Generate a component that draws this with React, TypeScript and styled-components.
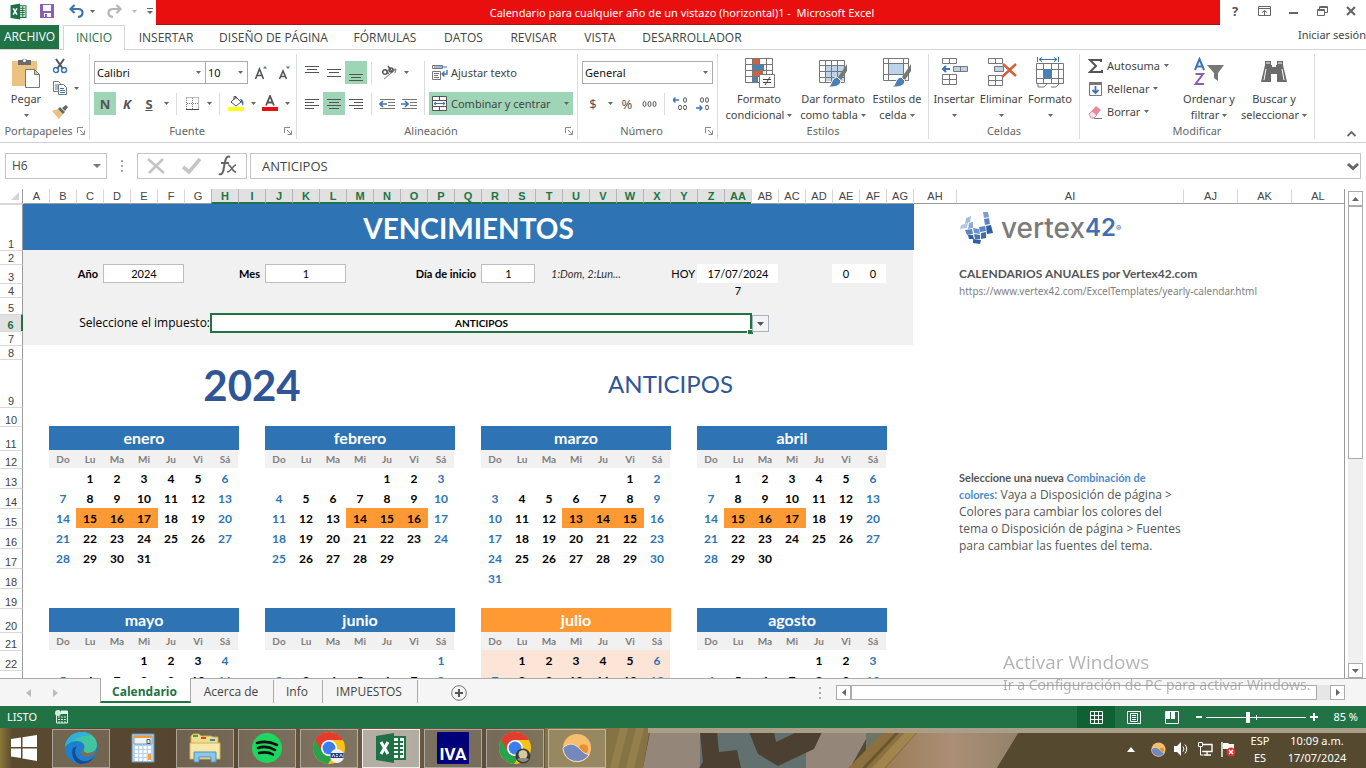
import React from "react";
import styled, { createGlobalStyle, css } from "styled-components";

const UI = `"Noto Sans", "Open Sans", sans-serif`;
const TABS_FONT = `"Open Sans", "Noto Sans", sans-serif`;
const CELL = `Lato, "Open Sans", sans-serif`;
const GREEN = "#217346";
const BLUE = "#2e74b5";
const ORANGE = "#ff9933";
const MINT = "#9fd5b7";
const INK = "#444444";
const GREY = "#777777";

const Global = createGlobalStyle`
  *, *::before, *::after { box-sizing: border-box; }
  body { margin: 0; background: #fff; color: ${INK}; font: 11px/16px ${UI}; }
  button, select, input { font: inherit; color: inherit; margin: 0; }
  button { border: 0; padding: 0; background: none; }
  svg { display: block; flex: none; }
`;

const Shell = styled.div`
  display: flex;
  flex-direction: column;
  height: 100vh;
  overflow: hidden;
`;

/* ---------- title bar ---------- */
const TitleBar = styled.header`
  display: flex;
  height: 25px;
`;
const QuickAccess = styled.div`
  display: flex;
  align-items: center;
  width: 156px;
  padding: 0 0 3px 7px;
`;
const Title = styled.h1`
  flex: 1;
  margin: 0;
  padding-right: 12px;
  background: #ea0f0f;
  border-bottom: 1px solid #a81414;
  color: #fff;
  font-size: 11px;
  font-weight: 400;
  line-height: 25px;
  text-align: center;
  white-space: pre;
`;
const WindowButtons = styled.div`
  display: flex;
  align-items: center;
  justify-content: space-between;
  width: 146px;
  padding: 0 4px 3px;
`;
const IconButton = styled.button<{ $w?: number; $on?: boolean }>`
  display: flex;
  flex: none;
  align-items: center;
  justify-content: center;
  width: ${(p) => p.$w ?? 22}px;
  height: 23px;
  background: ${(p) => (p.$on ? MINT : "transparent")};
  color: #555;
  font-size: 13px;
`;

/* ---------- tabs ---------- */
const TabStrip = styled.nav`
  display: flex;
  height: 25px;
  border-bottom: 1px solid #d4d4d4;
`;
const FileTab = styled.button`
  width: 59px;
  margin-right: 4px;
  height: 24px;
  background: ${GREEN};
  color: #fff;
  font-family: ${TABS_FONT};
  font-size: 12px;
`;
const Tab = styled.button<{ $w: number; $active?: boolean }>`
  width: ${(p) => p.$w}px;
  height: 25px;
  font-family: ${TABS_FONT};
  font-size: 12px;
  white-space: nowrap;
  ${(p) =>
    p.$active &&
    css`
      color: ${GREEN};
      background: #fff;
      border: 1px solid #d4d4d4;
      border-bottom: 0;
    `}
`;
const SignIn = styled.a`
  margin-left: auto;
  line-height: 20px;
  color: ${INK};
  text-decoration: none;
`;

/* ---------- ribbon ---------- */
const Ribbon = styled.section`
  display: flex;
  height: 93px;
  padding-top: 4px;
  border-bottom: 1px solid #d0d0d0;
`;
const Group = styled.div<{ $w: number }>`
  display: flex;
  flex: none;
  flex-direction: column;
  width: ${(p) => p.$w}px;
  height: 85px;
  border-right: 1px solid #dcdcdc;
`;
const GroupBody = styled.div`
  display: flex;
  flex: none;
  height: 72px;
`;
const GroupLabel = styled.div`
  display: flex;
  flex: none;
  align-items: center;
  height: 16px;
  color: #666;
  span { flex: 1; text-align: center; }
  svg { margin-right: 4px; }
`;
const Rows = styled.div<{ $pad?: number }>`
  display: flex;
  flex-direction: column;
  gap: 8px;
  padding: 7px 0 0 ${(p) => p.$pad ?? 4}px;
`;
const Row = styled.div`
  display: flex;
  align-items: center;
  height: 23px;
`;
const VLine = styled.i<{ $m?: number; $h?: number }>`
  flex: none;
  width: 1px;
  height: ${(p) => p.$h ?? 22}px;
  margin: 0 ${(p) => p.$m ?? 4}px;
  background: #dcdcdc;
`;
const TallLine = styled(VLine)`
  margin: 7px 4px 0;
  height: 54px;
`;
const SelectBox = styled.label<{ $w: number }>`
  display: flex;
  flex: none;
  align-items: center;
  width: ${(p) => p.$w}px;
  height: 23px;
  border: 1px solid #ababab;
  background: #fff;
  color: #111;
  & + & { margin-left: -1px; }
  select {
    flex: 1;
    min-width: 0;
    height: 20px;
    padding: 0 0 0 2px;
    border: 0;
    appearance: none;
    background: none;
  }
  svg { margin-right: 4px; }
`;
const BigButton = styled.button<{ $w: number }>`
  display: flex;
  flex: none;
  flex-direction: column;
  align-items: center;
  width: ${(p) => p.$w}px;
  height: 70px;
  padding-top: 3px;
  line-height: 16px;
  white-space: nowrap;
  > svg:first-child { margin-bottom: 2px; }
`;
const LabelLine = styled.span`
  display: flex;
  align-items: center;
  justify-content: center;
  gap: 3px;
  height: 16px;
`;
const SmallStack = styled.div<{ $w: number; $ml?: number }>`
  display: flex;
  flex: none;
  flex-direction: column;
  width: ${(p) => p.$w}px;
  margin-left: ${(p) => p.$ml ?? 0}px;
`;
const SmallButton = styled.button<{ $gap?: number }>`
  display: flex;
  flex: none;
  align-items: center;
  gap: ${(p) => p.$gap ?? 4}px;
  height: 23px;
  white-space: nowrap;
`;
const WideButton = styled.button<{ $on?: boolean }>`
  display: flex;
  align-items: center;
  gap: 3px;
  width: 144px;
  height: 23px;
  padding: 0 4px 0 3px;
  background: ${(p) => (p.$on ? MINT : "transparent")};
  white-space: nowrap;
  svg:last-child:not(:first-child) { margin-left: auto; }
`;
const RibbonEnd = styled.div`
  display: flex;
  flex: 1;
  align-items: flex-end;
  justify-content: flex-end;
  padding: 0 10px 5px 0;
`;

/* ---------- formula bar ---------- */
const FormulaBar = styled.div`
  display: flex;
  height: 46px;
  padding: 10px 5px 10px 5px;
`;
const Box = styled.div<{ $w?: number }>`
  display: flex;
  align-items: center;
  ${(p) => (p.$w ? `width: ${p.$w}px;` : "flex: 1;")}
  height: 26px;
  border: 1px solid #c4c4c4;
  background: #fff;
  input {
    flex: 1;
    min-width: 0;
    padding: 0 0 0 ${(p) => (p.$w ? 6 : 11)}px;
    border: 0;
    outline: 0;
    background: none;
    font-family: ${TABS_FONT};
    font-size: ${(p) => (p.$w ? 12 : 13)}px;
  }
`;
const Grip = styled.div<{ $w: number }>`
  display: flex;
  align-items: center;
  justify-content: center;
  width: ${(p) => p.$w}px;
`;

/* ---------- sheet ---------- */
const Main = styled.main`
  display: flex;
  flex: 1;
  min-height: 0;
`;
const GridPane = styled.div`
  flex: 1;
  min-width: 0;
  overflow: hidden;
  border-right: 1px solid #9b9b9b;
`;
const Grid = styled.table`
  width: 100%;
  table-layout: fixed;
  border-collapse: separate;
  border-spacing: 0;
  font-family: ${CELL};
  color: #000;
  th { padding: 0; white-space: nowrap; }
`;
const ColHead = styled.th<{ $sel?: boolean; $first?: boolean }>`
  height: 15px;
  border-left: 1px solid ${(p) => (p.$first ? "transparent" : p.$sel ? "#b5b5b5" : "#d8d8d8")};
  border-bottom: ${(p) => (p.$sel ? `2px solid ${GREEN}` : "1px solid #9b9b9b")};
  background: ${(p) => (p.$sel ? "#e1e1e1" : "#fff")};
  color: ${(p) => (p.$sel ? GREEN : INK)};
  font: ${(p) => (p.$sel ? 700 : 400)} 11px/12px "Liberation Sans", sans-serif;
`;
const Corner = styled.th`
  border-bottom: 1px solid #d8d8d8;
  border-right: 1px solid #9b9b9b;
  svg { margin-left: auto; margin-right: 3px; }
`;
const RowHead = styled.th<{ $h: number; $sel?: boolean }>`
  height: ${(p) => p.$h}px;
  border-top: 1px solid #d8d8d8;
  border-right: ${(p) => (p.$sel ? `2px solid ${GREEN}` : "1px solid #9b9b9b")};
  background: ${(p) => (p.$sel ? "#e1e1e1" : "#fff")};
  color: ${(p) => (p.$sel ? GREEN : INK)};
  font: ${(p) => (p.$sel ? 700 : 400)} 11px/12px "Liberation Sans", sans-serif;
  vertical-align: bottom;
`;

type Kind =
  | "blank" | "grey" | "banner" | "label" | "hoy" | "prompt" | "field" | "white" | "hint"
  | "selected" | "year" | "tax" | "month" | "monthNow" | "wday" | "day" | "weekend"
  | "due" | "now" | "nowEnd" | "ad" | "note";

const kinds: Record<Kind, string> = {
  blank: "",
  grey: "background:#f1f1f1; font-size:11px;",
  banner: `background:${BLUE}; box-shadow:1px 0 ${BLUE}; color:#fff; font-weight:700; font-size:28px;`,
  label: "background:#f1f1f1; font-weight:700; font-size:11px; text-align:right; padding:0 5px 0 0;",
  hoy: "background:#f1f1f1; font-size:11px; text-align:right; padding:0 2px 0 0;",
  prompt: `background:#f1f1f1; font-family:${TABS_FONT}; font-size:12px; text-align:right; padding-right:1px;`,
  field: "background:#fff; border:1px solid #bdbdbd; font-size:11px; padding-top:0;",
  white: "background:#fff; font-size:11px; padding-top:0;",
  hint: "background:#f1f1f1; font-style:italic; font-size:11px; color:#333; text-align:left; padding:0 0 0 16px;",
  selected: "position:relative; background:#fff; font-weight:700; font-size:10px;",
  year: "color:#2f5597; font-weight:700; font-size:42px; padding-top:3px;",
  tax: "color:#2f5597; font-size:24px;",
  month: `background:${BLUE}; box-shadow:1px 0 ${BLUE}; color:#fff; font-weight:700; font-size:16px; padding-top:0;`,
  monthNow: `background:${ORANGE}; box-shadow:1px 0 ${ORANGE}; color:#fff; font-weight:700; font-size:16px; padding-top:0;`,
  wday: "background:#f1f1f1; color:#7f7f7f; font-weight:700; font-size:10px; padding-top:0;",
  day: "font-weight:700; font-size:12px;",
  weekend: `color:${BLUE}; font-weight:700; font-size:12px;`,
  due: `background:${ORANGE}; box-shadow:1px 0 ${ORANGE}; font-weight:700; font-size:12px;`,
  now: "background:#fce4d6; font-weight:700; font-size:12px;",
  nowEnd: `background:#fce4d6; color:${BLUE}; font-weight:700; font-size:12px;`,
  ad: "color:#555; font-weight:700; font-size:12px; text-align:left; padding-left:3px;",
  note: "text-align:left; vertical-align:top; padding-left:3px;",
};
const Cell = styled.td<{ $k: Kind }>`
  padding: 1px 0 0 1px;
  line-height: 1;
  text-align: center;
  vertical-align: middle;
  white-space: nowrap;
  ${(p) => kinds[p.$k]}
`;
const Selection = styled.div`
  position: absolute;
  inset: -1px -1px -2px -1px;
  border: 2px solid ${GREEN};
  &::after {
    content: "";
    position: absolute;
    right: -3px;
    bottom: -3px;
    width: 6px;
    height: 5px;
    border: solid #fff;
    border-width: 1px 0 0 1px;
    background: ${GREEN};
  }
`;
const DropButton = styled.button`
  position: absolute;
  top: 1px;
  left: 100%;
  display: flex;
  align-items: center;
  justify-content: center;
  width: 17px;
  height: 17px;
  margin-left: 1px;
  border: 1px solid #a9b2ba;
  background: #f1f4f7;
`;
const AdLink = styled.a`
  color: #7f7f7f;
  font-family: ${UI};
  font-size: 10px;
  font-weight: 400;
  text-decoration: none;
`;
const Notes = styled.p`
  margin: 0;
  color: #555;
  font: 12px/17px ${TABS_FONT};
  b { font: 700 11px/17px ${CELL}; }
  a { color: #4a8bc9; font: 700 11px/17px ${CELL}; text-decoration: none; }
`;
const Logo = styled.div`
  display: flex;
  align-items: center;
  height: 40px;
  color: #7b7b7b;
  font: 500 28px/28px Inter, sans-serif;
  svg { margin: 0 7px 0 1px; }
  b { color: #3f6fb4; font-weight: 600; font-size: 24px; }
  sup { color: #3f6fb4; font-size: 8px; line-height: 8px; align-self: center; }
`;

/* ---------- scroll bars ---------- */
const VScroll = styled.div`
  display: flex;
  flex-direction: column;
  width: 15px;
  margin: 2px 3px 0 3px;
  background: #f0f0f0;
`;
const ArrowBox = styled.button`
  display: flex;
  flex: none;
  align-items: center;
  justify-content: center;
  width: 15px;
  height: 15px;
  border: 1px solid #ababab;
  background: #fff;
`;
const VThumb = styled.div`
  flex: 0 0 52%;
  border: 1px solid #ababab;
  background: #fff;
`;
const Spring = styled.div`
  flex: 1;
`;

/* ---------- sheet tabs ---------- */
const SheetBar = styled.div`
  display: flex;
  height: 28px;
  border-top: 1px solid #ababab;
  background: #f5f5f5;
`;
const SheetNav = styled.div`
  display: flex;
  align-items: center;
  gap: 22px;
  width: 100px;
  padding-left: 26px;
`;
const SheetTab = styled.button<{ $w: number; $active?: boolean }>`
  width: ${(p) => p.$w}px;
  height: 23px;
  margin-top: 1px;
  padding-right: 2px;
  border-right: 1px solid #ababab;
  font-family: ${TABS_FONT};
  font-size: 12px;
  ${(p) =>
    p.$active &&
    css`
      height: 25px;
      margin-top: -1px;
      padding-top: 4px;
      border: 1px solid #ababab;
      border-top: 0;
      border-bottom: 2px solid ${GREEN};
      background: #fff;
      color: ${GREEN};
      font-weight: 700;
    `}
`;
const AddSheet = styled.button`
  display: flex;
  align-items: center;
  margin-left: 33px;
`;
const HScroll = styled.div`
  display: flex;
  width: 509px;
  height: 15px;
  margin: 6px 21px 0 8px;
  background: #e6e6e6;
`;
const HThumb = styled.div`
  flex: 1;
  margin-right: 13px;
  border: 1px solid #ababab;
  background: #fff;
`;

/* ---------- status bar ---------- */
const StatusBar = styled.footer`
  display: flex;
  align-items: center;
  height: 22px;
  padding: 0 8px 0 7px;
  background: ${GREEN};
  color: #fff;
`;
const StatusText = styled.span`
  width: 48px;
`;
const ViewButton = styled.button<{ $on?: boolean }>`
  display: flex;
  align-items: center;
  justify-content: center;
  width: 38px;
  height: 22px;
  background: ${(p) => (p.$on ? "#0f6032" : "transparent")};
`;
const Zoom = styled.label`
  display: flex;
  align-items: center;
  gap: 4px;
  margin: 0 15px 0 5px;
  input {
    width: 100px;
    height: 12px;
    appearance: none;
    background: linear-gradient(#fff, #fff) center / 100% 1px no-repeat,
      linear-gradient(#fff, #fff) 50px center / 1px 5px no-repeat;
  }
  input::-webkit-slider-thumb {
    appearance: none;
    width: 4px;
    height: 11px;
    background: #fff;
  }
`;

/* ---------- taskbar ---------- */
const Taskbar = styled.div`
  position: relative;
  display: flex;
  align-items: center;
  height: 40px;
  background: #564a30;
  color: #fff;
`;
const Wallpaper = styled.svg`
  position: absolute;
  inset: 0;
  width: 100%;
  height: 40px;
`;
const TaskItem = styled.button<{ $mode?: "open" | "active" | "idle" }>`
  position: relative;
  display: flex;
  flex: none;
  align-items: center;
  justify-content: center;
  width: 58px;
  height: 39px;
  margin-right: 4px;
  ${(p) =>
    p.$mode === "open" &&
    "border:1px solid rgba(255,255,255,.4); background:rgba(255,255,255,.16);"}
  ${(p) =>
    p.$mode === "active" &&
    "border:1px solid rgba(255,255,255,.8); background:rgba(255,255,255,.5);"}
`;
const Start = styled(TaskItem)`
  width: 48px;
`;
const Tray = styled.div`
  position: relative;
  display: flex;
  align-items: center;
  gap: 8px;
  margin-left: auto;
  padding: 2px 16px 0 0;
  > svg:first-child { margin-right: 8px; }
`;
const TrayText = styled.div<{ $w: number }>`
  width: ${(p) => p.$w}px;
  font-size: 11px;
  line-height: 17px;
  text-align: center;
  white-space: nowrap;
`;

const Watermark = styled.div`
  position: fixed;
  right: 40px;
  bottom: 73px;
  width: 323px;
  color: rgba(140, 140, 140, 0.65);
  font-size: 14px;
  line-height: 20px;
  white-space: nowrap;
  pointer-events: none;
  strong { display: block; font: 400 19px/26px ${TABS_FONT}; }
`;

/* ---------- icons ---------- */
type IcoProps = { w: number; h: number; children: React.ReactNode; vb?: string };
const Ico = ({ w, h, children, vb }: IcoProps) => (
  <svg width={w} height={h} viewBox={vb ?? `0 0 ${w} ${h}`} fill="none" stroke={GREY} aria-hidden="true">
    {children}
  </svg>
);
const Arrow = ({ c = "#666" }: { c?: string }) => (
  <Ico w={5} h={3}><path d="M0 0h5L2.500 3z" fill={c} stroke="none" /></Ico>
);
const Launcher = () => (
  <Ico w={8} h={8}><path d="M.5 6V.5H6M3 3l4 4M7.500 3.500v4h-4" stroke="#888" /></Ico>
);
const Dots = () => (
  <Ico w={2} h={12}><path d="M0 1h2M0 6h2M0 11h2" stroke="#aaa" strokeWidth="2" /></Ico>
);
const ExcelMark = ({ s }: { s: number }) => (
  <Ico w={s} h={s} vb="0 0 32 32">
    <path d="M18 5h12v22H18z" fill="#fff" stroke="#217346" strokeWidth="2" />
    <path d="M18 10h10M18 14h10M18 18h10M18 22h10M24 6v20" stroke="#217346" strokeWidth="2" />
    <path d="M1 4l18-3v30L1 28z" fill="#1e7145" stroke="none" />
    <path d="M6 10l7 12M13 10L6 22" stroke="#fff" strokeWidth="3" />
  </Ico>
);
const Lines = ({ rows }: { rows: [number, number, number][] }) => (
  <Ico w={14} h={18}>
    {rows.map(([y, a, b]) => <path key={y} d={`M${a} ${y}.5H${b}`} stroke="#555" />)}
  </Ico>
);
const Sheet = ({ children }: { children?: React.ReactNode }) => (
  <Ico w={32} h={32}>{children}</Ico>
);
const Brush = () => (
  <>
    <path d="M30 7l-9 13 3 3 6-9z" fill="#777" stroke="none" />
    <path d="M20 20l4 4c-1 6-7 6-13 6 4-1 3-9 9-10z" fill="#4a7fb8" stroke="#fff" />
  </>
);
const Chrome = ({ children }: { children?: React.ReactNode }) => (
  <Ico w={34} h={34}>
    <circle cx="17" cy="17" r="16" fill="#fbc116" stroke="none" />
    <path d="M17 17L3.100 9A16 16 0 0 0 16 33l8-12z" fill="#2aa14b" stroke="none" />
    <path d="M17 9h13.900A16 16 0 0 0 3.100 9l7 11z" fill="#e33b2e" stroke="none" />
    <circle cx="17" cy="17" r="8" fill="#fff" stroke="none" />
    <circle cx="17" cy="17" r="6.400" fill="#3b7ded" stroke="none" />
    {children}
  </Ico>
);
const WeatherBall = ({ s }: { s: number }) => (
  <Ico w={s} h={s} vb="0 0 32 32">
    <circle cx="16" cy="16" r="15" fill="#f6bf6c" stroke="none" />
    <circle cx="23" cy="17" r="5" fill="#ee8f2d" stroke="none" />
    <path d="M1 16c6-6 12-5 17 0 4 4 7 7 11 7A15 15 0 0 1 1 16z" fill="#7389bd" stroke="#f7e3c2" />
  </Ico>
);

/* ---------- sheet data ---------- */
const COLS = [
  ..."ABCDEFGHIJKLMNOPQRSTUVWXYZ".split(""),
  ..."ABCDEFGHIJKL".split("").map((c) => "A" + c),
];
const colWidth = (i: number): number | undefined =>
  i === 0 ? 26 : i < 33 ? 27 : i === 33 ? 43 : i === 34 ? 227 : i < 37 ? 54 : undefined;

type C = { s?: number; r?: number; k: Kind; t?: React.ReactNode };
const g = (s = 1): C => ({ s, k: "grey" });
const b = (s = 1): C => ({ s, k: "blank" });

const WEEK = ["Do", "Lu", "Ma", "Mi", "Ju", "Vi", "Sá"];
type Month = { name: string; start: number; days: number; due?: number[]; now?: boolean };
const TOP: Month[] = [
  { name: "enero", start: 1, days: 31, due: [15, 16, 17] },
  { name: "febrero", start: 4, days: 29, due: [14, 15, 16] },
  { name: "marzo", start: 5, days: 31, due: [13, 14, 15] },
  { name: "abril", start: 1, days: 30, due: [15, 16, 17] },
];
const NEXT: Month[] = [
  { name: "mayo", start: 3, days: 31 },
  { name: "junio", start: 6, days: 30 },
  { name: "julio", start: 1, days: 31, now: true },
  { name: "agosto", start: 4, days: 31 },
];
const perMonth = (ms: Month[], f: (m: Month) => C[]): C[] => [b(), ...ms.flatMap((m) => [...f(m), b()])];
const nameRow = (ms: Month[]) => perMonth(ms, (m) => [{ s: 7, k: m.now ? "monthNow" : "month", t: m.name }]);
const wdayRow = (ms: Month[]) => perMonth(ms, () => WEEK.map((t): C => ({ k: "wday", t })));
const weekRow = (ms: Month[], w: number) =>
  perMonth(ms, (m) =>
    WEEK.map((_, d): C => {
      const n = w * 7 + d - m.start + 1;
      const end = d === 0 || d === 6;
      const t = n > 0 && n <= m.days ? n : "";
      if (m.due?.includes(n)) return { k: "due", t };
      if (m.now) return { k: end ? "nowEnd" : "now", t };
      return { k: end ? "weekend" : "day", t };
    })
  );

const vertexLogo = (
  <Logo>
    <Ico w={34} h={32}>
      <g stroke="none">
        <path d="M6 6l5-2-1 6-5 2z" fill="#a9bcdc" />
        <path d="M1 13l7-2-1 5-7 1z" fill="#b8c8e2" />
        <path d="M9 11l4-1 0 6-5 1z" fill="#8ea9d4" />
        <path d="M5 18l7-1 1 5-6 1z" fill="#5d84c0" />
        <path d="M13 16l6 1 1 5-6-1z" fill="#6f93c9" />
        <path d="M14 22l6 1 0 4-5 0z" fill="#4673b5" />
        <path d="M21 21l5-1v6l-5 1z" fill="#3f6bb0" />
        <path d="M13 27l8 1-1 4-7-1z" fill="#2f5fa8" />
        <path d="M8 23l5 0 1 4-5 0z" fill="#2f5fa8" />
        <path d="M23 0l5 0 1 5-5 1z" fill="#7f9ecf" />
        <path d="M24 7l5-1 1 6-5 1z" fill="#5c83c0" />
        <path d="M26 14l5-1 2 8-6 1z" fill="#2f5fa8" />
        <path d="M19 15l6-1 1 5-6 1z" fill="#5c83c0" />
      </g>
    </Ico>
    <span>vertex</span><b>42</b><sup>®</sup>
  </Logo>
);

const taxCell = (
  <>
    ANTICIPOS
    <Selection />
    <DropButton aria-label="Elegir impuesto"><Ico w={7} h={4}><path d="M0 0h7L3.500 4z" fill="#555" stroke="none" /></Ico></DropButton>
  </>
);

const note: C = {
  r: 5,
  k: "note",
  t: (
    <Notes>
      <b>Seleccione una nueva </b><a href="#colores">Combinación de<br />colores</a>: Vaya a Disposición de página &gt;
      <br />Colores para cambiar los colores del
      <br />tema o Disposición de página &gt; Fuentes
      <br />para cambiar las fuentes del tema.
    </Notes>
  ),
};

const ROWS: [number, C[]][] = [
  [46, [{ s: 33, k: "banner", t: "VENCIMIENTOS" }, b(), { k: "ad", t: vertexLogo }, b(3)]],
  [14, [g(33), b(5)]],
  [19, [
    g(), { s: 2, k: "label", t: "Año" }, { s: 3, k: "field", t: "2024" }, g(),
    { s: 2, k: "label", t: "Mes" }, { s: 3, k: "field", t: "1" },
    { s: 5, k: "label", t: "Día de inicio" }, { s: 2, k: "field", t: "1" },
    { s: 4, k: "hint", t: "1:Dom, 2:Lun..." }, { s: 2, k: "hoy", t: "HOY" },
    { s: 3, k: "white", t: "17/07/2024" }, g(2), { k: "white", t: "0" }, { k: "white", t: "0" }, g(),
    b(), { k: "ad", t: "CALENDARIOS ANUALES por Vertex42.com" }, b(3),
  ]],
  [14, [g(25), { s: 3, k: "grey", t: "7" }, g(5), b(),
    { k: "ad", t: <AdLink href="https://www.vertex42.com/ExcelTemplates/yearly-calendar.html">https://www.vertex42.com/ExcelTemplates/yearly-calendar.html</AdLink> }, b(3)]],
  [17, [g(33), b(5)]],
  [17, [g(), { s: 6, k: "prompt", t: "Seleccione el impuesto:" }, { s: 20, k: "selected", t: taxCell }, g(6), b(5)]],
  [14, [g(33), b(5)]],
  [14, [b(38)]],
  [48, [b(), { s: 15, k: "year", t: "2024" }, { s: 16, k: "tax", t: "ANTICIPOS" }, b(6)]],
  [19, [b(38)]],
  [24, [...nameRow(TOP), b(5)]],
  [18, [...wdayRow(TOP), b(5)]],
  [20, [...weekRow(TOP, 0), b(), note, b(3)]],
  [20, [...weekRow(TOP, 1), b(), b(3)]],
  [20, [...weekRow(TOP, 2), b(), b(3)]],
  [20, [...weekRow(TOP, 3), b(), b(3)]],
  [20, [...weekRow(TOP, 4), b(), b(3)]],
  [20, [...weekRow(TOP, 5), b(5)]],
  [20, [b(38)]],
  [24, [...nameRow(NEXT), b(5)]],
  [18, [...wdayRow(NEXT), b(5)]],
  [20, [...weekRow(NEXT, 0), b(5)]],
  [20, [...weekRow(NEXT, 1), b(5)]],
];

const TABS: [string, number][] = [
  ["INSERTAR", 82], ["DISEÑO DE PÁGINA", 133], ["FÓRMULAS", 90], ["DATOS", 67],
  ["REVISAR", 73], ["VISTA", 60], ["DESARROLLADOR", 124],
];

/* Ribbon group with its caption pinned to the lower edge */
const Captioned = styled(Group)`
  justify-content: space-between;
  ${GroupBody} { height: 69px; }
`;

export default function App() {
  return (
    <Shell>
      <Global />
      <TitleBar>
        <QuickAccess>
          <IconButton $w={22} aria-label="Excel"><ExcelMark s={17} /></IconButton>
          <IconButton $w={36} aria-label="Guardar">
            <Ico w={14} h={14}><path d="M0 0h14v14H0z" fill="#8a5fb5" stroke="none" /><path d="M3 1h8v6H3zM4 9h7v4H4z" fill="#fff" stroke="none" /><path d="M5 10h2v3H5z" fill="#8a5fb5" stroke="none" /></Ico>
          </IconButton>
          <IconButton $w={22} aria-label="Deshacer">
            <Ico w={15} h={14}><path d="M1 5h8c6 0 6 7 0 8M5.500 1L1.500 5l4 4" stroke="#3b74b3" strokeWidth="2.200" /></Ico>
          </IconButton>
          <IconButton $w={10} aria-label="Opciones de deshacer"><Arrow /></IconButton>
          <IconButton $w={34} aria-label="Rehacer">
            <Ico w={15} h={14}><path d="M14 5H6C0 5 0 12 6 13M9.500 1l4 4-4 4" stroke="#b5b5b5" strokeWidth="2.200" /></Ico>
          </IconButton>
          <IconButton $w={6} aria-label="Opciones de rehacer"><Arrow c="#bbb" /></IconButton>
          <IconButton $w={26} aria-label="Personalizar">
            <Ico w={6} h={7}><path d="M0 .5h6" stroke="#666" /><path d="M0 3h6L3 6z" fill="#666" stroke="none" /></Ico>
          </IconButton>
        </QuickAccess>
        <Title>{"Calendario para cualquier año de un vistazo (horizontal)1 -  Microsoft Excel"}</Title>
        <WindowButtons>
          <IconButton aria-label="Ayuda"><b>?</b></IconButton>
          <IconButton aria-label="Opciones de cinta">
            <Ico w={13} h={10}><path d="M.5.5h12v9H.5zM.5 2.500h12M6.500 9V4.500M4 6.500l2.500-2 2.500 2" stroke="#666" /></Ico>
          </IconButton>
          <IconButton aria-label="Minimizar"><Ico w={9} h={10}><path d="M0 7h9" stroke="#666" strokeWidth="2" /></Ico></IconButton>
          <IconButton aria-label="Restaurar">
            <Ico w={11} h={10}><path d="M2.500 3V.5h8v6H8M.5 3.500h7v6h-7zM2.500 1.500h8M.5 4.500h7" stroke="#666" /></Ico>
          </IconButton>
          <IconButton aria-label="Cerrar"><Ico w={10} h={10}><path d="M1 1l8 8M9 1L1 9" stroke="#666" strokeWidth="2.200" /></Ico></IconButton>
        </WindowButtons>
      </TitleBar>

      <TabStrip>
        <FileTab>ARCHIVO</FileTab>
        <Tab $w={62} $active>INICIO</Tab>
        {TABS.map(([t, w]) => <Tab key={t} $w={w}>{t}</Tab>)}
        <SignIn href="#sesion">Iniciar sesión</SignIn>
      </TabStrip>

      <Ribbon>
        <Captioned $w={90}>
          <GroupBody>
            <BigButton $w={52}>
              <Ico w={30} h={32}>
                <path d="M1 4h25v25H1z" fill="#eac282" stroke="none" />
                <path d="M7 3h4a3 3 0 0 1 5 0h4v5H7z" fill="#6b6b6b" stroke="none" />
                <circle cx="13.500" cy="3.500" r="1.500" fill="#fff" stroke="none" />
                <path d="M14.500 12.500h9l5 5v13h-14zM23.500 12.500v5h5" fill="#fff" />
              </Ico>
              <LabelLine>Pegar</LabelLine>
              <LabelLine><Arrow /></LabelLine>
            </BigButton>
            <SmallStack $w={34}>
              <SmallButton aria-label="Cortar">
                <Ico w={16} h={16}><path d="M4 1l7 10M12 1L5 11" stroke="#555" strokeWidth="2" /><circle cx="4" cy="12" r="2.500" stroke="#3b74b3" strokeWidth="1.400" /><circle cx="12" cy="12" r="2.500" stroke="#3b74b3" strokeWidth="1.400" /></Ico>
              </SmallButton>
              <SmallButton $gap={6} aria-label="Copiar">
                <Ico w={16} h={15}><path d="M1.500.5h5l2 2v8h-7z" fill="#fff" /><path d="M3 4h3M3 6h3M3 8h3" stroke="#3b74b3" /><path d="M6.500 3.500h5l3 3v7h-8z" fill="#fff" /><path d="M8 7.500h4M8 9.500h5M8 11.500h5" stroke="#3b74b3" /></Ico>
                <Arrow />
              </SmallButton>
              <SmallButton aria-label="Copiar formato">
                <Ico w={16} h={14}><path d="M0 6l6-2 5 5-4 5z" fill="#eac282" stroke="none" /><path d="M6 4l2-2 5 5-2 2zM10 3l4-3 2 2-3 4z" fill="#666" stroke="none" /></Ico>
              </SmallButton>
            </SmallStack>
          </GroupBody>
          <GroupLabel><span>Portapapeles</span><Launcher /></GroupLabel>
        </Captioned>

        <Captioned $w={207}>
          <GroupBody>
            <Rows>
              <Row>
                <SelectBox $w={112}>
                  <select aria-label="Fuente"><option>Calibri</option></select><Arrow />
                </SelectBox>
                <SelectBox $w={43}>
                  <select aria-label="Tamaño"><option>10</option></select><Arrow />
                </SelectBox>
                <IconButton $w={26} aria-label="Aumentar tamaño">
                  <Ico w={14} h={16}><path d="M1.500 14L5.500 4l4 10M3 10.500h5" stroke="#555" strokeWidth="1.600" /><path d="M9 3.500h4L11 1z" fill="#3b74b3" stroke="none" /></Ico>
                </IconButton>
                <IconButton $w={20} aria-label="Reducir tamaño">
                  <Ico w={13} h={16}><path d="M1.500 14L5 6l3.500 8M3 11.500h4" stroke="#555" strokeWidth="1.600" /><path d="M8 1.500h4L10 4z" fill="#3b74b3" stroke="none" /></Ico>
                </IconButton>
              </Row>
              <Row>
                <IconButton $on><b>N</b></IconButton>
                <IconButton><b><em>K</em></b></IconButton>
                <IconButton><b><u>S</u></b></IconButton>
                <IconButton $w={12} aria-label="Subrayados"><Arrow /></IconButton>
                <VLine />
                <IconButton $w={22} aria-label="Bordes">
                  <Ico w={13} h={13}><path d="M.5.5h12v12M.5 1v11M6.500 1v11M1 6.500h11" strokeDasharray="1 1" /><path d="M0 12.500h13" stroke="#444" /></Ico>
                </IconButton>
                <IconButton $w={12} aria-label="Más bordes"><Arrow /></IconButton>
                <VLine />
                <IconButton $w={25} aria-label="Color de relleno">
                  <Ico w={17} h={17}><path d="M3 7l5-5 5 5-5 4z" fill="#fff" stroke="#555" /><path d="M6 5V1.500h2V4" stroke="#555" /><path d="M12 4c3 0 4 3 3 7l-2-4z" fill="#3b74b3" stroke="none" /><path d="M0 12h16v4H0z" fill="#ffff1e" stroke="none" /></Ico>
                </IconButton>
                <IconButton $w={8} aria-label="Más rellenos"><Arrow /></IconButton>
                <IconButton $w={26} aria-label="Color de fuente">
                  <Ico w={16} h={17}><path d="M4 10.500L8 1l4 9.500M5.500 7.500h5" stroke="#555" strokeWidth="1.800" /><path d="M0 12h16v4H0z" fill="#ea0f0f" stroke="none" /></Ico>
                </IconButton>
                <IconButton $w={8} aria-label="Más colores"><Arrow /></IconButton>
              </Row>
            </Rows>
          </GroupBody>
          <GroupLabel><span>Fuente</span><Launcher /></GroupLabel>
        </Captioned>

        <Captioned $w={281}>
          <GroupBody>
            <Rows>
              <Row>
                <IconButton aria-label="Alinear arriba"><Lines rows={[[2, 0, 14], [5, 2, 12], [8, 0, 14]]} /></IconButton>
                <IconButton aria-label="Alinear en medio"><Lines rows={[[5, 0, 14], [8, 2, 12], [12, 0, 14]]} /></IconButton>
                <IconButton $on aria-label="Alinear abajo"><Lines rows={[[10, 0, 14], [13, 2, 12], [16, 0, 14]]} /></IconButton>
                <VLine />
                <IconButton $w={26} aria-label="Orientación">
                  <Ico w={17} h={16}><path d="M3 14L15 4M15 4l-4 .5M15 4l-1 4" stroke="#777" /><circle cx="4" cy="7" r="2.200" stroke="#555" strokeWidth="1.400" /><path d="M5.500 5l2 4M7 1l4 6" stroke="#555" strokeWidth="1.400" /><circle cx="10" cy="5" r="2" stroke="#555" strokeWidth="1.400" /></Ico>
                </IconButton>
                <IconButton $w={8} aria-label="Más orientaciones"><Arrow /></IconButton>
              </Row>
              <Row>
                <IconButton aria-label="Alinear a la izquierda"><Lines rows={[[4, 0, 14], [7, 0, 9], [10, 0, 14], [13, 0, 9]]} /></IconButton>
                <IconButton $on aria-label="Centrar"><Lines rows={[[4, 0, 14], [7, 2, 12], [10, 0, 14], [13, 2, 12]]} /></IconButton>
                <IconButton aria-label="Alinear a la derecha"><Lines rows={[[4, 0, 14], [7, 5, 14], [10, 0, 14], [13, 5, 14]]} /></IconButton>
                <VLine />
                <IconButton aria-label="Disminuir sangría">
                  <Ico w={16} h={12}><path d="M1 1.500h15M9 4.500h7M9 7.500h7M1 10.500h15" stroke="#777" /><path d="M1 6h7M4 3L1 6l3 3" stroke="#3b74b3" strokeWidth="1.600" /></Ico>
                </IconButton>
                <IconButton aria-label="Aumentar sangría">
                  <Ico w={16} h={12}><path d="M1 1.500h15M9 4.500h7M9 7.500h7M1 10.500h15" stroke="#777" /><path d="M0 6h7M4 3l3 3-3 3" stroke="#3b74b3" strokeWidth="1.600" /></Ico>
                </IconButton>
              </Row>
            </Rows>
            <TallLine />
            <Rows $pad={0}>
              <WideButton>
                <Ico w={16} h={16}><path d="M.5.500h10v3H.5z" /><path d="M2 2h13" stroke="#3b74b3" /><path d="M.5 6.500h8v8h-8zM2 8.500h5M2 10.500h4M2 12.500h5" /><path d="M15 5v4h-5M12.500 6.500L10 9l2.500 2.500" stroke="#3b74b3" strokeWidth="1.400" /></Ico>
                <span>Ajustar texto</span>
              </WideButton>
              <WideButton $on>
                <Ico w={16} h={16}><path d="M.5.500h14v14H.5zM.5 4.500h14M.5 10.500h14M7.500.5v4M7.500 10.500v4" fill="#fff" stroke="#555" /><path d="M2 7.500h11M4 6L2 7.500 4 9M11 6l2 1.500L11 9" stroke="#3b74b3" /></Ico>
                <span>Combinar y centrar</span><Arrow />
              </WideButton>
            </Rows>
          </GroupBody>
          <GroupLabel><span>Alineación</span><Launcher /></GroupLabel>
        </Captioned>

        <Captioned $w={140}>
          <GroupBody>
            <Rows>
              <Row>
                <SelectBox $w={131}>
                  <select aria-label="Formato de número"><option>General</option></select><Arrow />
                </SelectBox>
              </Row>
              <Row>
                <IconButton aria-label="Moneda">$</IconButton>
                <IconButton $w={12} aria-label="Más monedas"><Arrow /></IconButton>
                <IconButton aria-label="Porcentaje">%</IconButton>
                <IconButton aria-label="Millares">
                  <Ico w={15} h={8}><ellipse cx="2.500" cy="4" rx="1.500" ry="2.700" stroke="#555" /><ellipse cx="7.500" cy="4" rx="1.500" ry="2.700" stroke="#555" /><ellipse cx="12.500" cy="4" rx="1.500" ry="2.700" stroke="#555" /></Ico>
                </IconButton>
                <VLine />
                <IconButton aria-label="Aumentar decimales">
                  <Ico w={15} h={14}><path d="M0 3h6M2.500.5L0 3l2.500 2.500" stroke="#3b74b3" strokeWidth="1.400" /><ellipse cx="12" cy="3" rx="1.500" ry="2.300" stroke="#555" /><ellipse cx="7" cy="10.500" rx="1.500" ry="2.300" stroke="#555" /><ellipse cx="12" cy="10.500" rx="1.500" ry="2.300" stroke="#555" /></Ico>
                </IconButton>
                <IconButton aria-label="Disminuir decimales">
                  <Ico w={15} h={14}><ellipse cx="7" cy="3" rx="1.500" ry="2.300" stroke="#555" /><ellipse cx="12" cy="3" rx="1.500" ry="2.300" stroke="#555" /><path d="M1 11h6M4.500 8.500L7 11l-2.500 2.500" stroke="#3b74b3" strokeWidth="1.400" /><ellipse cx="12" cy="10.500" rx="1.500" ry="2.300" stroke="#555" /></Ico>
                </IconButton>
              </Row>
            </Rows>
          </GroupBody>
          <GroupLabel><span>Número</span><Launcher /></GroupLabel>
        </Captioned>

        <Captioned $w={211}>
          <GroupBody>
            <BigButton $w={82}>
              <Sheet>
                <path d="M2.500 1.500h27v24h-27zM2.500 7.500h27M2.500 13.500h27M2.500 19.500h27M9.500 1.500v24M16.500 1.500v24M23.500 1.500v24" fill="#fff" />
                <path d="M10 2h6v5h-6zM10 14h10v5H10z" fill="#d2603f" stroke="none" />
                <path d="M10 8h11v5H10zM10 20h5v5h-5z" fill="#4a7fb8" stroke="none" />
                <path d="M16.500 17.500h15v13h-15z" fill="#fff" />
                <path d="M20 22.500h8M20 25.500h8M27 20l-5 8" stroke="#444" />
              </Sheet>
              <LabelLine>Formato</LabelLine>
              <LabelLine>condicional<Arrow /></LabelLine>
            </BigButton>
            <BigButton $w={66}>
              <Sheet>
                <path d="M9 9h18v15H9z" fill="#bdd3ea" stroke="none" />
                <path d="M2.500 3.500h25v22h-25zM2.500 8.500h25M2.500 14.500h25M2.500 20.500h25M8.500 3.500v22M14.500 3.500v22M20.500 3.500v22" />
                <Brush />
              </Sheet>
              <LabelLine>Dar formato</LabelLine>
              <LabelLine>como tabla<Arrow /></LabelLine>
            </BigButton>
            <BigButton $w={62}>
              <Sheet>
                <path d="M8 7h14v10H8z" fill="#bdd3ea" stroke="none" />
                <path d="M2.500 1.500h25v22h-25zM2.500 6.500h25M2.500 17.500h25M7.500 1.500v22M22.500 1.500v22" />
                <Brush />
              </Sheet>
              <LabelLine>Estilos de</LabelLine>
              <LabelLine>celda<Arrow /></LabelLine>
            </BigButton>
          </GroupBody>
          <GroupLabel><span>Estilos</span></GroupLabel>
        </Captioned>

        <Captioned $w={151}>
          <GroupBody>
            <BigButton $w={50}>
              <Sheet>
                <path d="M4.500 1.500h14v5h-14zM11.500 1.500v5M4.500 17.500h14v10h-14zM4.500 22.500h14M11.500 17.500v10" />
                <path d="M15.500 9.500h14v5h-14zM22.500 9.500v5" fill="#bdd3ea" />
                <path d="M5 12h7M8 9l-3 3 3 3" stroke="#3b74b3" strokeWidth="2" />
              </Sheet>
              <LabelLine>Insertar</LabelLine>
              <LabelLine><Arrow /></LabelLine>
            </BigButton>
            <BigButton $w={44}>
              <Sheet>
                <path d="M3.500 1.500h14v5h-14zM10.500 1.500v5M3.500 18.500h14v10h-14zM3.500 23.500h14M10.500 18.500v10" />
                <path d="M9.500 9.500h9v5h-9z" fill="#bdd3ea" />
                <path d="M18 7l13 12M31 7L17 20" stroke="#d2603f" strokeWidth="2.400" />
              </Sheet>
              <LabelLine>Eliminar</LabelLine>
              <LabelLine><Arrow /></LabelLine>
            </BigButton>
            <BigButton $w={54}>
              <Sheet>
                <path d="M2.500 6.500h27v20h-27zM2.500 12.500h27M2.500 21.500h27M9.500 6.500v20M17.500 6.500v20M24.500 6.500v20" />
                <path d="M4 27v3h6l3-3M17 30h5l3-3" />
                <path d="M10 12h8v9h-8z" fill="#4a7fb8" stroke="none" />
                <path d="M3.500 0v5M24.500 0v5M5 2.500h18M8 .5l-3 2 3 2M20 .5l3 2-3 2" stroke="#3b74b3" />
              </Sheet>
              <LabelLine>Formato</LabelLine>
              <LabelLine><Arrow /></LabelLine>
            </BigButton>
          </GroupBody>
          <GroupLabel><span>Celdas</span></GroupLabel>
        </Captioned>

        <Captioned $w={235}>
          <GroupBody>
            <SmallStack $w={90} $ml={8}>
              <SmallButton>
                <Ico w={15} h={16}><path d="M13 4V2H2l6 6-6 6h12v-2" stroke="#555" strokeWidth="2" /></Ico>
                <span>Autosuma</span><Arrow />
              </SmallButton>
              <SmallButton>
                <Ico w={15} h={16}><path d="M1.500 1.500h12v13h-12z" /><path d="M1 1h13v3H1z" fill="#777" stroke="none" /><path d="M7.500 5v7M4.500 9l3 3 3-3" stroke="#3b74b3" strokeWidth="1.800" /></Ico>
                <span>Rellenar</span><Arrow />
              </SmallButton>
              <SmallButton>
                <Ico w={15} h={14}><path d="M1 9l7-8 5 4-7 8H3z" fill="#e58a9b" stroke="none" /><path d="M1 9l3-3 5 4-3 3H3z" fill="#fbe3e7" stroke="#e58a9b" /><path d="M6 13.500h8" /></Ico>
                <span>Borrar</span><Arrow />
              </SmallButton>
            </SmallStack>
            <BigButton $w={62}>
              <Sheet>
                <path d="M2 13L6.500 2l4.500 11M3.500 9.500h6" stroke="#3f74b8" strokeWidth="2" />
                <path d="M2.500 17h7.500L2.500 27h8.500" stroke="#8d5bb0" strokeWidth="2" />
                <path d="M14 8h17l-6 8v8l-4-3v-5z" fill="#777" stroke="none" />
              </Sheet>
              <LabelLine>Ordenar y</LabelLine>
              <LabelLine>filtrar<Arrow /></LabelLine>
            </BigButton>
            <BigButton $w={68}>
              <Sheet>
                <path d="M7 4h6v4h1v2h4V8h1V4h6v4l4 17H19v-8h-6v8H3L7 8z" fill="#6b6b6b" stroke="none" />
                <path d="M8 6h4M20 6h4" stroke="#fff" />
                <path d="M8 12l-2 11M24 12l2 11" stroke="#fff" />
              </Sheet>
              <LabelLine>Buscar y</LabelLine>
              <LabelLine>seleccionar<Arrow /></LabelLine>
            </BigButton>
          </GroupBody>
          <GroupLabel><span>Modificar</span></GroupLabel>
        </Captioned>
        <RibbonEnd>
          <button aria-label="Contraer cinta"><Ico w={9} h={6}><path d="M.5 5l4-4 4 4" stroke="#666" strokeWidth="1.800" /></Ico></button>
        </RibbonEnd>
      </Ribbon>

      <FormulaBar>
        <Box $w={102}>
          <input aria-label="Cuadro de nombres" defaultValue="H6" />
          <Ico w={17} h={4}><path d="M4 0h8L8 4z" fill="#777" stroke="none" /></Ico>
        </Box>
        <Grip $w={30}><Dots /></Grip>
        <Box $w={110}>
          <IconButton $w={36} aria-label="Cancelar"><Ico w={18} h={16}><path d="M1 1l16 14M16 1L2 15" stroke="#c4c4c4" strokeWidth="2.600" /></Ico></IconButton>
          <IconButton $w={36} aria-label="Introducir"><Ico w={20} h={16}><path d="M1 9l6 5L18 1" stroke="#c4c4c4" strokeWidth="3.600" /></Ico></IconButton>
          <IconButton $w={36} aria-label="Insertar función">
            <Ico w={20} h={22}><path d="M12 2c-4-2-5 4-6 10-.8 6-2 8-5 7M3 8h8" stroke="#666" strokeWidth="2" /><path d="M10 10c3-1 4 7 8 7M18 10c-3 0-5 7-9 7" stroke="#666" strokeWidth="1.600" /></Ico>
          </IconButton>
        </Box>
        <Grip $w={3} />
        <Box>
          <input aria-label="Barra de fórmulas" defaultValue="ANTICIPOS" />
          <Ico w={14} h={9}><path d="M2 2l5 4.500L12 2" stroke="#666" strokeWidth="3" /></Ico>
        </Box>
      </FormulaBar>

      <Main>
        <GridPane>
          <Grid>
            <colgroup>
              <col width={23} />
              {COLS.map((c, i) => <col key={c} width={colWidth(i)} />)}
            </colgroup>
            <thead>
              <tr>
                <Corner><Ico w={8} h={8}><path d="M8 0v8H0z" fill="#d5d5d5" stroke="none" /></Ico></Corner>
                {COLS.map((c, i) => <ColHead key={c} $first={i === 0} $sel={i > 6 && i < 27}>{c}</ColHead>)}
              </tr>
            </thead>
            <tbody>
              {ROWS.map(([h, cells], i) => (
                <tr key={i}>
                  <RowHead $h={h} $sel={i === 5}>{i < 22 ? i + 1 : ""}</RowHead>
                  {cells.map((c, j) => (
                    <Cell key={j} $k={c.k} colSpan={c.s} rowSpan={c.r}>{c.t}</Cell>
                  ))}
                </tr>
              ))}
            </tbody>
          </Grid>
        </GridPane>
        <VScroll>
          <ArrowBox aria-label="Subir"><Ico w={7} h={4}><path d="M0 4h7L3.500 0z" fill="#666" stroke="none" /></Ico></ArrowBox>
          <VThumb />
          <Spring />
          <ArrowBox aria-label="Bajar"><Ico w={7} h={4}><path d="M0 0h7L3.500 4z" fill="#666" stroke="none" /></Ico></ArrowBox>
        </VScroll>
      </Main>

      <SheetBar>
        <SheetNav>
          <button aria-label="Hojas anteriores"><Ico w={5} h={8}><path d="M5 0v8L0 4z" fill="#bbb" stroke="none" /></Ico></button>
          <button aria-label="Hojas siguientes"><Ico w={5} h={8}><path d="M0 0v8l5-4z" fill="#bbb" stroke="none" /></Ico></button>
        </SheetNav>
        <SheetTab $w={91} $active>Calendario</SheetTab>
        <SheetTab $w={83}>Acerca de</SheetTab>
        <SheetTab $w={49}>Info</SheetTab>
        <SheetTab $w={95}>IMPUESTOS</SheetTab>
        <AddSheet aria-label="Hoja nueva">
          <Ico w={16} h={16}><circle cx="8" cy="8" r="7.300" /><path d="M8 4v8M4 8h8" stroke="#555" strokeWidth="2" /></Ico>
        </AddSheet>
        <Spring />
        <Grip $w={16}><Dots /></Grip>
        <HScroll>
          <ArrowBox aria-label="Izquierda"><Ico w={4} h={7}><path d="M4 0v7L0 3.500z" fill="#666" stroke="none" /></Ico></ArrowBox>
          <HThumb />
          <ArrowBox aria-label="Derecha"><Ico w={4} h={7}><path d="M0 0v7l4-3.500z" fill="#666" stroke="none" /></Ico></ArrowBox>
        </HScroll>
      </SheetBar>

      <StatusBar>
        <StatusText>LISTO</StatusText>
        <Ico w={14} h={14}><path d="M1.500 4v9h11V1H6" stroke="#e5f3ea" /><path d="M6 1h7v3H6z" fill="#e5f3ea" stroke="none" /><circle cx="3" cy="3" r="3" fill="#d0ecdb" stroke="none" /><path d="M3 7h9M3 9.500h9M3 12h9" stroke="#e5f3ea" strokeDasharray="2 1" /></Ico>
        <Spring />
        <ViewButton $on aria-label="Normal"><Ico w={13} h={13}><path d="M.5.500h12v12H.5zM.5 4.500h12M.5 8.500h12M4.500.5v12M8.500.5v12" stroke="#fff" /></Ico></ViewButton>
        <ViewButton aria-label="Diseño de página"><Ico w={14} h={13}><path d="M.5.500h13v12H.5zM3.500 2.500h7v8h-7zM5 4.500h4M5 6.500h4M5 8.500h4" stroke="#fff" /></Ico></ViewButton>
        <ViewButton aria-label="Salto de página"><Ico w={14} h={13}><path d="M.5.500h13v12H.5z" stroke="#fff" /><path d="M1 1h4v7H1zM6 1h4v7H6z" fill="#fff" stroke="none" /></Ico></ViewButton>
        <Zoom>
          <Ico w={6} h={8}><path d="M0 4h6" stroke="#fff" strokeWidth="2" /></Ico>
          <input type="range" min={0} max={100} defaultValue={41} aria-label="Zoom" />
          <Ico w={8} h={8}><path d="M0 4h8M4 0v8" stroke="#fff" strokeWidth="2" /></Ico>
        </Zoom>
        <span>85 %</span>
      </StatusBar>

      <Taskbar>
        <Wallpaper viewBox="0 0 1366 40" preserveAspectRatio="none" aria-hidden="true">
          <defs>
            <linearGradient id="wood" x1="0" x2="1" y1="0" y2="0">
              <stop offset="0" stopColor="#8a7838" />
              <stop offset=".02" stopColor="#5a4a30" />
              <stop offset=".3" stopColor="#55452f" />
              <stop offset=".6" stopColor="#6a5c48" />
              <stop offset=".8" stopColor="#5c4f3a" />
              <stop offset="1" stopColor="#77683c" />
            </linearGradient>
            <linearGradient id="skin" x1="0" x2="1" y1="0" y2="0">
              <stop offset="0" stopColor="#9c7d58" />
              <stop offset=".5" stopColor="#ab8e76" />
              <stop offset="1" stopColor="#93826a" />
            </linearGradient>
          </defs>
          <path d="M0 0h620v40H0z" fill="url(#wood)" />
          <path d="M545 0h105l-7 40H545z" fill="#857245" />
          <path d="M620 0h8l-10 40h-8zM636 0h8l-10 40h-8z" fill="#957f4b" />
          <path d="M650 4h220l-20 36H643z" fill="#94877a" />
          <path d="M700 4h120l-14 16v20H700z" fill="#62706f" />
          <path d="M700 4h17l2 20 18-2 4 18h-42l4-6z" fill="#4b4032" />
          <path d="M749 4h25l2 10 21-10h25l-8 17-36 17-20-12z" fill="#4b4032" />
          <path d="M866 4h20l-20 22z" fill="#6f7565" />
          <path d="M884 4h36l-32 36h-40z" fill="#8c7040" />
          <path d="M896 4h4l-34 36h-4z" fill="#6b5430" />
          <path d="M905 4h12l-33 36h-12z" fill="#a1854c" />
          <path d="M918 4h101l-22 36H886z" fill="url(#skin)" />
          <path d="M1019 4h347v36H997z" fill="#554a30" />
          <path d="M648 0h718v5H648z" fill="#a99f89" />
        </Wallpaper>
        <Start aria-label="Inicio">
          <Ico w={28} h={28}><path d="M1 5l10-1.500V13H1zM12.500 3.200L27 1v12H12.500zM1 14.500h10V24L1 22.500zM12.500 14.500H27V27l-14.500-2.400z" fill="#fff" stroke="none" /></Ico>
        </Start>
        <TaskItem $mode="open" aria-label="Edge">
          <Ico w={34} h={34}>
            <circle cx="17" cy="17" r="16" fill="#1c7fd0" stroke="none" />
            <path d="M1 16C2 6 10 1 18 1c9 0 15 6 15 13 0 5-4 8-9 8-4 0-5-2-4-4 2-4-2-8-7-8-6 0-10 3-12 6z" fill="#41c4a2" stroke="none" />
            <path d="M1 16C2 6 10 1 18 1c3 0 6 1 9 3-8 1-14 2-18 6-4 1-7 4-8 6z" fill="#2fb0dc" stroke="none" />
            <path d="M13 15c-4 5-2 13 6 15 5 1 9-2 12-5-3 5-8 8-14 8C9 32 7 22 9 17z" fill="#174a94" stroke="none" />
            <path d="M20 18c-1 2 0 4 4 4 3 0 6-1 8-3-1 5-5 7-9 7-6 0-9-6-3-8z" fill="#7b6f5c" stroke="none" />
          </Ico>
        </TaskItem>
        <TaskItem $mode="idle" aria-label="Calculadora">
          <Ico w={24} h={30}>
            <path d="M1 1h22v28H1z" fill="#b5d3ea" stroke="#6d93b5" />
            <path d="M3 3h18v8H3z" fill="#eef3f5" stroke="#7f9db5" /><path d="M3 3h18v2H3z" fill="#ee9a3a" stroke="none" />
            <path d="M16 6.500h3v4h-3z" stroke="#456" />
            <path d="M4 14.500h16M4 18.500h16M4 22.500h16M4 26.500h16" stroke="#fff" strokeWidth="3" strokeDasharray="3 1.300" />
            <path d="M17 21h3v6h-3z" fill="#f0a24b" stroke="none" />
          </Ico>
        </TaskItem>
        <TaskItem $mode="open" aria-label="Explorador">
          <Ico w={34} h={30}>
            <path d="M3 3l2-2h6l2 2h10l2 1h5v20H3z" fill="#f1dc8e" stroke="#c9a94e" />
            <path d="M5 2h5v2H5z" fill="#3aa648" stroke="none" /><path d="M13 4h5v2h-5z" fill="#d9402f" stroke="none" /><path d="M22 6h5v2h-5z" fill="#3b82c8" stroke="none" />
            <path d="M2 10h30v16H2z" fill="#f7e7a8" stroke="#cfb25c" />
            <path d="M6 29V19h22v10h-5v-5H11v5z" fill="#8cc6e8" stroke="#4f93bd" />
          </Ico>
        </TaskItem>
        <TaskItem $mode="open" aria-label="Spotify">
          <Ico w={32} h={32}>
            <circle cx="16" cy="16" r="15" fill="#1ed760" stroke="none" />
            <path d="M6 11c7-2 14-1 20 2M7 16c6-2 12-1 17 2M8 21c5-1 10-1 14 1.500" stroke="#111" strokeWidth="2.600" strokeLinecap="round" />
          </Ico>
        </TaskItem>
        <TaskItem $mode="open" aria-label="Chrome AEA">
          <Chrome><circle cx="25" cy="25" r="7" fill="#f1f1f1" stroke="none" /><path d="M18.500 22h13v5h-13z" fill="#1f3f7d" stroke="none" /><path d="M20 26l1.500-3 1.500 3M24 23.500h2M24 25.500h2M27.500 26l1.500-3 1.500 3" stroke="#fff" strokeWidth=".8" /></Chrome>
        </TaskItem>
        <TaskItem $mode="active" aria-label="Excel"><ExcelMark s={32} /></TaskItem>
        <TaskItem $mode="open" aria-label="IVA">
          <svg width="32" height="32" viewBox="0 0 32 32">
            <rect width="32" height="32" rx="1" fill="#00007a" />
            <text x="16" y="28" textAnchor="middle" fill="#fff" fontFamily="Roboto, sans-serif" fontWeight="700" fontSize="17">IVA</text>
          </svg>
        </TaskItem>
        <TaskItem $mode="open" aria-label="Chrome">
          <Chrome><circle cx="25" cy="25" r="7.500" fill="#3b3a2e" stroke="none" /><circle cx="25" cy="23.500" r="4.500" fill="#d3c9a2" stroke="none" /><path d="M19 28c4 4 9 4 12 0l-3-1h-6z" fill="#8b8d80" stroke="none" /></Chrome>
        </TaskItem>
        <TaskItem $mode="open" aria-label="El tiempo"><WeatherBall s={30} /></TaskItem>
        <Tray>
          <Ico w={8} h={5}><path d="M0 5h8L4 0z" fill="#fff" stroke="none" /></Ico>
          <WeatherBall s={15} />
          <Ico w={16} h={14}><path d="M0 4h3l4-4v14l-4-4H0z" fill="#fff" stroke="none" /><path d="M9 4.500q2 2.500 0 5M11 2.500q3.500 4.500 0 9" stroke="#fff" /></Ico>
          <Ico w={15} h={14}><path d="M5 2.500h9v7H4M9 10v3M6 13h7" stroke="#fff" strokeWidth="1.400" /><path d="M.5.500h4v4h-4zM2.500 5v8h3" fill="#554a30" stroke="#fff" /></Ico>
          <Ico w={15} h={15}><path d="M1 0v15" stroke="#fff" strokeWidth="1.400" /><path d="M2 1h5l1 1h5v6H8L7 7H2z" fill="#fff" stroke="none" /><circle cx="10" cy="10" r="4.500" fill="#e03030" stroke="none" /><path d="M8 8l4 4M12 8l-4 4" stroke="#fff" strokeWidth="1.400" /></Ico>
          <TrayText $w={32}>ESP<br />ES</TrayText>
          <TrayText $w={66}>10:09 a.m.<br />17/07/2024</TrayText>
        </Tray>
      </Taskbar>

      <Watermark><strong>Activar Windows</strong>Ir a Configuración de PC para activar Windows.</Watermark>
    </Shell>
  );
}
